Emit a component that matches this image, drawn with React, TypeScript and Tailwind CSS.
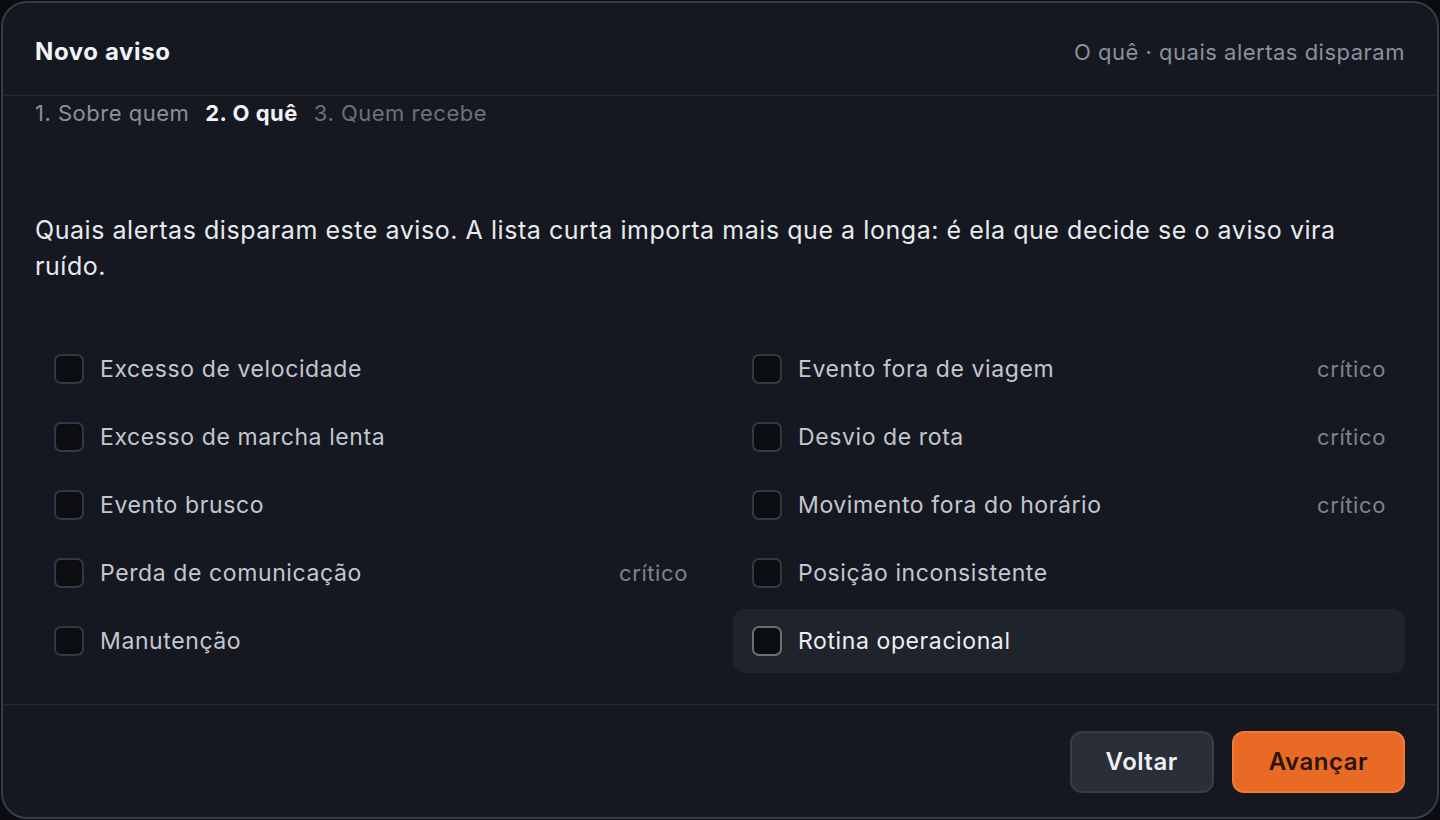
import React, { useState } from 'react';

type Alerta = { id: string; label: string; critico?: boolean };

const esquerda: Alerta[] = [
  { id: 'velocidade', label: 'Excesso de velocidade' },
  { id: 'marcha', label: 'Excesso de marcha lenta' },
  { id: 'brusco', label: 'Evento brusco' },
  { id: 'comunicacao', label: 'Perda de comunicação', critico: true },
  { id: 'manutencao', label: 'Manutenção' },
];

const direita: Alerta[] = [
  { id: 'fora-viagem', label: 'Evento fora de viagem', critico: true },
  { id: 'desvio', label: 'Desvio de rota', critico: true },
  { id: 'horario', label: 'Movimento fora do horário', critico: true },
  { id: 'posicao', label: 'Posição inconsistente' },
  { id: 'rotina', label: 'Rotina operacional' },
];

const AlertaRow: React.FC<{
  alerta: Alerta;
  checked: boolean;
  active: boolean;
  onToggle: () => void;
}> = ({ alerta, checked, active, onToggle }) => (
  <button
    onClick={onToggle}
    className={`flex h-16 w-full items-center gap-4 rounded-xl px-[19px] text-left ${
      active ? 'bg-[#1f232b]' : 'hover:bg-[#1f232b]'
    }`}
  >
    <span
      className={`flex h-[30px] w-[30px] shrink-0 items-center justify-center rounded-[7px] border-2 ${
        active ? 'border-[#6b717c]' : 'border-[#323844]'
      } ${checked ? 'bg-[#e86a24]' : 'bg-[#0c0e12]'}`}
    >
      {checked && (
        <svg viewBox="0 0 24 24" className="h-4 w-4" fill="none" stroke="#1a0d05" strokeWidth="3">
          <path d="M5 12l5 5 9-10" />
        </svg>
      )}
    </span>
    <span
      className={`flex-1 text-[23px] tracking-[0.6px] ${active ? 'text-[#eceef2]' : 'text-[#c3c7cf]'}`}
    >
      {alerta.label}
    </span>
    {alerta.critico && <span className="text-[22px] tracking-[0.6px] text-[#7d838e]">crítico</span>}
  </button>
);

export default function App() {
  const [selected, setSelected] = useState<Record<string, boolean>>({});
  const toggle = (id: string) => setSelected((s) => ({ ...s, [id]: !s[id] }));

  return (
    <div
      className="h-[820px] w-[1440px] overflow-hidden bg-[#0a0c10] p-[1px]"
      style={{ fontFamily: 'Inter, "Noto Sans", sans-serif' }}
    >
      <div className="flex h-full flex-col rounded-[26px] border-2 border-[#353b47] bg-[#151820]">
        <header className="flex h-[93px] shrink-0 items-center justify-between border-b border-[#242831] px-[32px] pt-[6px]">
          <h1 className="text-[24px] font-bold tracking-[0.6px] text-[#f2f3f6]">Novo aviso</h1>
          <span className="text-[22px] tracking-[0.5px] text-[#8a909b]">O quê · quais alertas disparam</span>
        </header>

        <nav className="flex gap-4 px-[32px] pt-[1px] text-[22px] tracking-[0.5px]">
          <span className="text-[#8a909b]">1. Sobre quem</span>
          <span className="font-bold text-[#f2f3f6]">2. O quê</span>
          <span className="text-[#6a707b]">3. Quem recebe</span>
        </nav>

        <main className="flex-1 px-[32px] pt-[82px]">
          <p className="text-[25px] leading-[36px] tracking-[0.55px] text-[#e8eaee]">
            Quais alertas disparam este aviso. A lista curta importa mais que a longa: é ela que decide se o
            aviso vira ruído.
          </p>

          <div className="mt-[53px] grid grid-cols-2 gap-x-[26px]">
            <div className="flex flex-col gap-1">
              {esquerda.map((a) => (
                <AlertaRow
                  key={a.id}
                  alerta={a}
                  checked={!!selected[a.id]}
                  active={false}
                  onToggle={() => toggle(a.id)}
                />
              ))}
            </div>
            <div className="flex flex-col gap-1">
              {direita.map((a) => (
                <AlertaRow
                  key={a.id}
                  alerta={a}
                  checked={!!selected[a.id]}
                  active={a.id === 'rotina'}
                  onToggle={() => toggle(a.id)}
                />
              ))}
            </div>
          </div>
        </main>

        <footer className="flex h-[113px] shrink-0 items-center justify-end gap-[18px] border-t border-[#242831] px-[32px] pt-[2px]">
          <button className="h-[62px] rounded-xl border-2 border-[#373d48] bg-[#292e38] px-[34px] text-[24px] font-semibold tracking-[0.5px] text-[#eef0f3]">
            Voltar
          </button>
          <button className="h-[62px] rounded-xl border-2 border-[#f07a36] bg-[#e86a24] px-[35px] text-[24px] font-semibold tracking-[0.5px] text-[#2a1306]">
            Avançar
          </button>
        </footer>
      </div>
    </div>
  );
}
